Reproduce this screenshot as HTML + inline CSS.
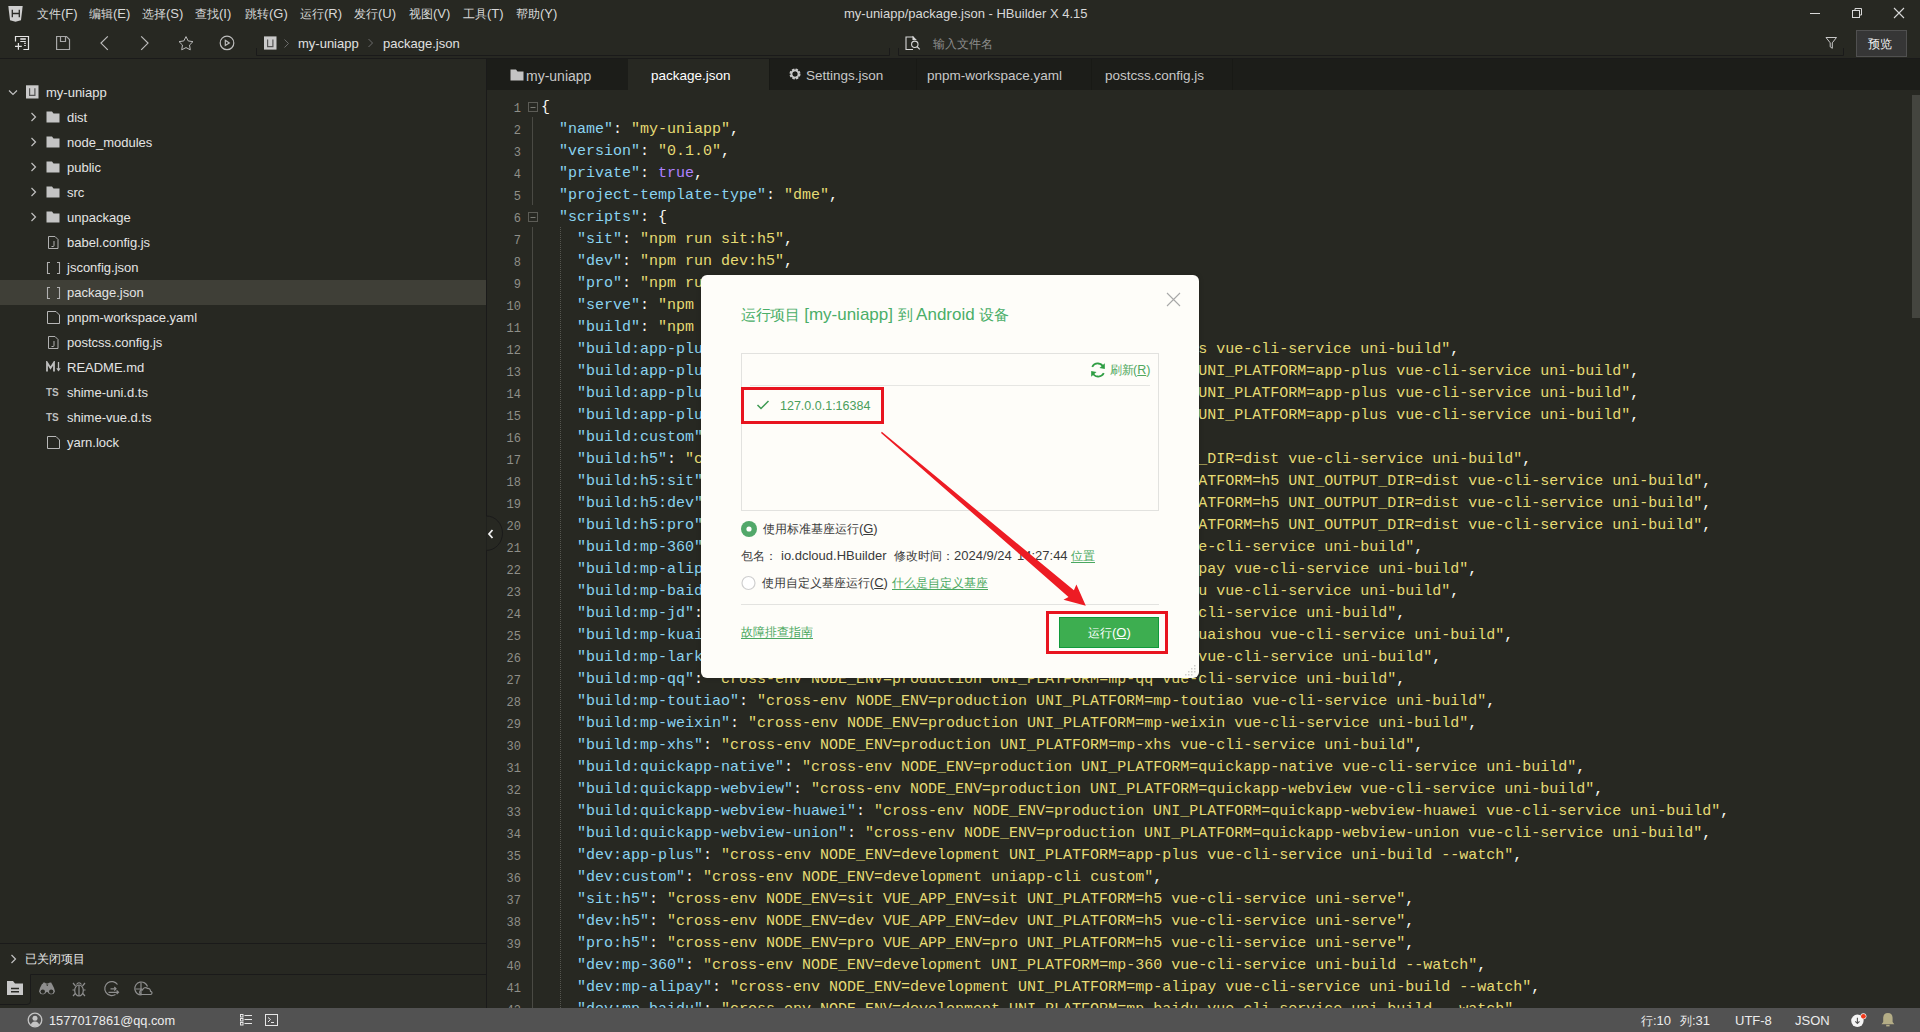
<!DOCTYPE html><html><head><meta charset="utf-8"><style>
*{margin:0;padding:0;box-sizing:border-box}
html,body{width:1920px;height:1032px;overflow:hidden;background:#272822;font-family:"Liberation Sans",sans-serif;color:#dcdcdc}
.a{position:absolute}
.t{position:absolute;white-space:pre;font-size:13px;line-height:16px}
.menu>span{position:absolute;top:6px;font-size:13px;color:#d8d8d8;white-space:pre}
.code{position:absolute;left:541px;top:97px;font-family:"Liberation Mono",monospace;font-size:15px;line-height:22px;white-space:pre;color:#f8f8f2}
.ln{position:absolute;left:489px;top:98px;width:32px;text-align:right;font-family:"Liberation Mono",monospace;font-size:12px;line-height:22px;color:#8f8f89;white-space:pre}
.k{color:#8ad3f0}.s{color:#e6db74}.p{color:#f8f8f2}.b{color:#ae81ff}
.tree .t{color:#e4e4e4}
.cj{font-size:0.923em;display:inline-block;width:1em;overflow:visible}
.ttl .cj{font-size:0.86em}
</style></head><body><div class="a" style="left:0;top:0;width:1920px;height:56px;background:#272822"></div><svg class="a" style="left:8px;top:6px" width="16" height="17" viewBox="0 0 16 17"><path d="M0.3 0 H14.7 L13 14.3 L7.5 15.8 L2 14.3 Z" fill="#cfcfcf"/><path d="M4.3 3.8 V11.3 M11.3 3.8 V11.3 M4.3 7.5 H11.3" stroke="#2a2a26" stroke-width="1.3" fill="none"/></svg><div class="menu"><span style="left:37px"><span class="cj">文</span><span class="cj">件</span>(F)</span><span style="left:89px"><span class="cj">编</span><span class="cj">辑</span>(E)</span><span style="left:142px"><span class="cj">选</span><span class="cj">择</span>(S)</span><span style="left:195px"><span class="cj">查</span><span class="cj">找</span>(I)</span><span style="left:245px"><span class="cj">跳</span><span class="cj">转</span>(G)</span><span style="left:300px"><span class="cj">运</span><span class="cj">行</span>(R)</span><span style="left:354px"><span class="cj">发</span><span class="cj">行</span>(U)</span><span style="left:409px"><span class="cj">视</span><span class="cj">图</span>(V)</span><span style="left:463px"><span class="cj">工</span><span class="cj">具</span>(T)</span><span style="left:516px"><span class="cj">帮</span><span class="cj">助</span>(Y)</span></div><div class="t" style="left:844px;top:6px;color:#d8d8d8">my-uniapp/package.json - HBuilder X 4.15</div><svg class="a" style="left:1800px;top:0" width="120" height="28" viewBox="0 0 120 28"><path d="M10 13.5 H20" stroke="#d8d8d8" stroke-width="1"/><rect x="52.5" y="10.5" width="7" height="7" fill="none" stroke="#d8d8d8"/><path d="M55 10.5 V8.5 H61.5 V15 H59.5" fill="none" stroke="#d8d8d8"/><path d="M94 8 L104 18 M104 8 L94 18" stroke="#d8d8d8" stroke-width="1.1"/></svg><svg class="a" style="left:0;top:28px" width="300" height="30" viewBox="0 0 300 30">
<g fill="none" stroke="#bdbdbd" stroke-width="1.2">
<path d="M15.5 13.6 V8.5 H28.5 V21.5 H23.4" stroke="#e4e4e4"/><path d="M20.3 11 H25.8" stroke-width="1.6" stroke="#e4e4e4"/><path d="M20.3 13.5 H25.8 M24.2 15.4 H25.8 M24.2 17.5 H25.8" stroke="#e4e4e4"/><path d="M15 18.4 H21.8 M18.4 15 V21.8" stroke="#e4e4e4"/>
<path d="M56.6 8.5 H66.5 L69.5 11.5 V21.5 H56.6 Z" stroke="#a8a8a8"/><path d="M60.5 8.5 V13.5 H65.5 V8.5" stroke="#a8a8a8"/>
<path d="M107.8 8.3 L101 15.1 L107.8 21.9"/>
<path d="M141.2 8.3 L148 15.1 L141.2 21.9"/>
<path d="M186.00 8.60 L188.17 12.91 L192.94 13.64 L189.52 17.04 L190.29 21.81 L186.00 19.60 L181.71 21.81 L182.48 17.04 L179.06 13.64 L183.83 12.91 Z" stroke-linejoin="round" stroke-width="1"/>
<circle cx="227" cy="14.9" r="6.8"/><path d="M225.3 12.3 L229.3 14.9 L225.3 17.5 Z"/>
</g>
<rect x="264" y="8.4" width="12.5" height="13.2" fill="#cacaca"/><path d="M267.6 11.6 V18.6 H272.9 V11.6" stroke="#555" stroke-width="1.2" fill="none"/>
<path d="M284.5 11.5 L288.5 15.5 L284.5 19.5" stroke="#6c6c6c" fill="none"/>

</svg><div class="t" style="left:298px;top:36px;font-size:13px;color:#e0e0e0">my-uniapp</div><svg class="a" style="left:366px;top:37px" width="10" height="12"><path d="M2.5 2 L6.5 6 L2.5 10" stroke="#6c6c6c" fill="none"/></svg><div class="t" style="left:383px;top:36px;font-size:13px;color:#e0e0e0">package.json</div><svg class="a" style="left:880px;top:28px" width="1040" height="30" viewBox="0 0 1040 30"><g fill="none" stroke="#d8d8d8" stroke-width="1.1"><path d="M33 21.5 H26 V9 H33.5"/><path d="M33 9 L35.5 11.5 H33 Z" fill="#d8d8d8"/><circle cx="34.8" cy="16.3" r="3.2"/><path d="M37 18.5 L39.8 21.3"/></g><path d="M946 9.5 H956.5 L952.3 14.8 V20.3 L950.2 18.8 V14.8 Z" fill="none" stroke="#c8c8c8" stroke-width="1"/></svg><div class="t" style="left:933px;top:36px;font-size:13px;color:#8c8c8c"><span class="cj">输</span><span class="cj">入</span><span class="cj">文</span><span class="cj">件</span><span class="cj">名</span></div><div class="a" style="left:1856px;top:30px;width:51px;height:27px;background:#363636;border:1px solid #505050"></div><div class="t" style="left:1868px;top:36px;font-size:13px;color:#f4f4f4"><span class="cj">预</span><span class="cj">览</span></div><svg class="a" style="left:0;top:0" width="1920" height="60"><path d="M256.5 48 V55.5 H889.5 V48 M898.5 48 V55.5 H1843.5 V48" stroke="#1a1a1a" fill="none"/></svg><div class="a" style="left:0;top:58px;width:1920px;height:1px;background:#1a1a1a"></div><div class="a" style="left:486px;top:58px;width:1px;height:950px;background:#1a1a1a"></div><div class="a" style="left:0;top:280px;width:486px;height:25px;background:#3f3f37"></div><div class="tree"><svg class="a" style="left:8px;top:89px" width="10" height="8"><path d="M1 1.5 L5 5.5 L9 1.5" stroke="#c0c0c0" stroke-width="1.2" fill="none"/></svg><svg class="a" style="left:26px;top:85px" width="14" height="14"><rect x="0" y="0.3" width="12.5" height="13.2" fill="#cacaca"/><path d="M3.6 3.3 V10.3 H8.9 V3.3" stroke="#555" stroke-width="1.2" fill="none"/></svg><div class="t" style="left:46px;top:85px">my-uniapp</div><svg class="a" style="left:30px;top:112px" width="8" height="10"><path d="M1.5 1 L5.5 5 L1.5 9" stroke="#c0c0c0" stroke-width="1.2" fill="none"/></svg><svg class="a" style="left:46px;top:111px" width="14" height="12"><path d="M0.5 0.5 H6 L7.5 2.5 H13.5 V11.5 H0.5 Z" fill="#c4c4c4"/></svg><div class="t" style="left:67px;top:110px">dist</div><svg class="a" style="left:30px;top:137px" width="8" height="10"><path d="M1.5 1 L5.5 5 L1.5 9" stroke="#c0c0c0" stroke-width="1.2" fill="none"/></svg><svg class="a" style="left:46px;top:136px" width="14" height="12"><path d="M0.5 0.5 H6 L7.5 2.5 H13.5 V11.5 H0.5 Z" fill="#c4c4c4"/></svg><div class="t" style="left:67px;top:135px">node_modules</div><svg class="a" style="left:30px;top:162px" width="8" height="10"><path d="M1.5 1 L5.5 5 L1.5 9" stroke="#c0c0c0" stroke-width="1.2" fill="none"/></svg><svg class="a" style="left:46px;top:161px" width="14" height="12"><path d="M0.5 0.5 H6 L7.5 2.5 H13.5 V11.5 H0.5 Z" fill="#c4c4c4"/></svg><div class="t" style="left:67px;top:160px">public</div><svg class="a" style="left:30px;top:187px" width="8" height="10"><path d="M1.5 1 L5.5 5 L1.5 9" stroke="#c0c0c0" stroke-width="1.2" fill="none"/></svg><svg class="a" style="left:46px;top:186px" width="14" height="12"><path d="M0.5 0.5 H6 L7.5 2.5 H13.5 V11.5 H0.5 Z" fill="#c4c4c4"/></svg><div class="t" style="left:67px;top:185px">src</div><svg class="a" style="left:30px;top:212px" width="8" height="10"><path d="M1.5 1 L5.5 5 L1.5 9" stroke="#c0c0c0" stroke-width="1.2" fill="none"/></svg><svg class="a" style="left:46px;top:211px" width="14" height="12"><path d="M0.5 0.5 H6 L7.5 2.5 H13.5 V11.5 H0.5 Z" fill="#c4c4c4"/></svg><div class="t" style="left:67px;top:210px">unpackage</div><svg class="a" style="left:47px;top:236px" width="13" height="14"><path d="M1.5 0.5 H8 L11 3.5 V12.5 H1.5 Z" fill="none" stroke="#b0b0b0"/><path d="M7 5 V9.5 Q7 10.5 6 10.5 H4.5" stroke="#b0b0b0" fill="none"/></svg><div class="t" style="left:67px;top:235px">babel.config.js</div><svg class="a" style="left:46px;top:261px" width="15" height="14"><path d="M4 1.5 H1.5 V12.5 H4 M11 1.5 H13.5 V12.5 H11" stroke="#b0b0b0" stroke-width="1.1" fill="none"/></svg><div class="t" style="left:67px;top:260px">jsconfig.json</div><svg class="a" style="left:46px;top:286px" width="15" height="14"><path d="M4 1.5 H1.5 V12.5 H4 M11 1.5 H13.5 V12.5 H11" stroke="#b0b0b0" stroke-width="1.1" fill="none"/></svg><div class="t" style="left:67px;top:285px">package.json</div><svg class="a" style="left:47px;top:311px" width="14" height="13"><path d="M0.5 0.5 H9 L12.5 4 V12.5 H0.5 Z" fill="none" stroke="#b8b8b8"/></svg><div class="t" style="left:67px;top:310px">pnpm-workspace.yaml</div><svg class="a" style="left:47px;top:336px" width="13" height="14"><path d="M1.5 0.5 H8 L11 3.5 V12.5 H1.5 Z" fill="none" stroke="#b0b0b0"/><path d="M7 5 V9.5 Q7 10.5 6 10.5 H4.5" stroke="#b0b0b0" fill="none"/></svg><div class="t" style="left:67px;top:335px">postcss.config.js</div><svg class="a" style="left:46px;top:361px" width="16" height="12"><path d="M1 10.5 V1.5 L4.5 7 L8 1.5 V10.5" stroke="#bdbdbd" stroke-width="1.8" fill="none" stroke-linejoin="miter"/><path d="M12.5 1 V9.5" stroke="#bdbdbd" stroke-width="1.3"/><path d="M10.3 7.3 L12.5 10.5 L14.7 7.3 Z" fill="#bdbdbd"/></svg><div class="t" style="left:67px;top:360px">README.md</div><div class="t" style="left:46px;top:385px;color:#bdbdbd;font-size:10px;font-weight:bold">TS</div><div class="t" style="left:67px;top:385px">shime-uni.d.ts</div><div class="t" style="left:46px;top:410px;color:#bdbdbd;font-size:10px;font-weight:bold">TS</div><div class="t" style="left:67px;top:410px">shime-vue.d.ts</div><svg class="a" style="left:47px;top:436px" width="14" height="13"><path d="M0.5 0.5 H9 L12.5 4 V12.5 H0.5 Z" fill="none" stroke="#b8b8b8"/></svg><div class="t" style="left:67px;top:435px">yarn.lock</div></div><svg class="a" style="left:486px;top:515px" width="20" height="38" viewBox="0 0 20 38"><path d="M0.5 1 A16 17.2 0 0 1 0.5 35.4" fill="#272822" stroke="#1a1a1a"/><path d="M6.5 15 L3 19 L6.5 23" stroke="#f0f0f0" stroke-width="1.8" fill="none"/></svg><div class="a" style="left:0;top:943px;width:486px;height:1px;background:#1a1a1a"></div><svg class="a" style="left:10px;top:954px" width="8" height="10"><path d="M1.5 1 L5.5 5 L1.5 9" stroke="#c0c0c0" stroke-width="1.2" fill="none"/></svg><div class="t" style="left:25px;top:951px;color:#e4e4e4"><span class="cj">已</span><span class="cj">关</span><span class="cj">闭</span><span class="cj">项</span><span class="cj">目</span></div><svg class="a" style="left:0;top:974px" width="486" height="34" viewBox="0 0 486 34"><path d="M30.5 0.5 H486" stroke="#1a1a1a"/><path d="M30.5 0.5 V27 Q30.5 30.5 27 30.5 H0" stroke="#1a1a1a" fill="none"/><path d="M7 7 H13 L15 9.5 H23 V21 H7 Z" fill="#c8c8c8"/><path d="M11 14.5 H19 M11 17.8 H19" stroke="#2a2b26" stroke-width="1.5"/><g fill="#8e8e8e"><path d="M40 14 L42 10 H46 L47 12 H47.5 L48.5 10 H52 L54 14 L55 17.5 A4 4 0 0 1 47.5 18 H46.5 A4 4 0 0 1 39 17.5 Z"/><path d="M42.5 9 Q44.5 8 46 9.5 H48 Q50 8 52 9 L51 10.5 H43.5 Z"/></g><g fill="#272822"><circle cx="42.8" cy="17.6" r="2.2"/><circle cx="51.2" cy="17.6" r="2.2"/></g><g fill="none" stroke="#8e8e8e" stroke-width="1.2"><ellipse cx="79" cy="16.5" rx="4.3" ry="5.5"/><path d="M79 11 V22 M76.5 10.5 Q79 7 81.5 10.5 M73 9 L75.5 12 M85 9 L82.5 12 M72.5 16 H74.7 M85.5 16 H83.3 M73 22 L75.3 19.5 M85 22 L82.7 19.5"/><path d="M117.5 10.5 A7 7 0 1 0 115.5 20.5"/><path d="M110.5 14.8 H116 M114.3 13 L116 14.8 L114.3 16.6 M108.5 18.3 H118.5 M116.6 16.5 L118.5 18.3 L116.6 20.1"/><path d="M147.5 12.5 A6.5 6.5 0 1 0 141.5 21"/><path d="M135.5 15 H142 M141 8.5 V21"/><path d="M141.5 20.5 H150.3 A1.6 1.6 0 0 0 150.5 17.3 A2.6 2.6 0 0 0 147.5 14.5 A3 3 0 0 0 142.5 16 A2.2 2.2 0 0 0 141.5 20.5 Z"/></g></svg><div class="a" style="left:487px;top:59px;width:1433px;height:31px;background:#1c1d19"></div><div class="a" style="left:628px;top:59px;width:141px;height:31px;background:#272822"></div><div class="a" style="left:769px;top:59px;width:1px;height:31px;background:#181915"></div><div class="a" style="left:916px;top:59px;width:1px;height:31px;background:#181915"></div><div class="a" style="left:1091px;top:59px;width:1px;height:31px;background:#181915"></div><div class="a" style="left:1232px;top:59px;width:1px;height:31px;background:#181915"></div><svg class="a" style="left:510px;top:69px" width="14" height="12"><path d="M0.5 0.5 H6 L7.5 2.5 H13.5 V11.5 H0.5 Z" fill="#c4c4c4"/></svg><div class="t" style="left:526px;top:68px;font-size:14px;color:#c8c8c8">my-uniapp</div><div class="t" style="left:651px;top:68px;font-size:13.5px;color:#ffffff">package.json</div><svg class="a" style="left:788px;top:67px" width="14" height="14" viewBox="0 0 14 14"><circle cx="7" cy="7" r="4.2" fill="none" stroke="#c8c8c8" stroke-width="2.6" stroke-dasharray="2.2 1.1"/><circle cx="7" cy="7" r="3.6" fill="none" stroke="#c8c8c8" stroke-width="1.8"/></svg><div class="t" style="left:806px;top:68px;font-size:13.5px;color:#c8c8c8">Settings.json</div><div class="t" style="left:927px;top:68px;font-size:13.5px;color:#c8c8c8">pnpm-workspace.yaml</div><div class="t" style="left:1105px;top:68px;font-size:13.5px;color:#c8c8c8">postcss.config.js</div><div class="ln">1
2
3
4
5
6
7
8
9
10
11
12
13
14
15
16
17
18
19
20
21
22
23
24
25
26
27
28
29
30
31
32
33
34
35
36
37
38
39
40
41
42</div><div class="a" style="left:532px;top:117px;width:1px;height:88px;background:#4a4a44"></div><div class="a" style="left:532px;top:227px;width:1px;height:781px;background:#4a4a44"></div><div class="a" style="left:560px;top:227px;width:1px;height:781px;background-image:linear-gradient(#55554f 50%,transparent 50%);background-size:1px 2px"></div><svg class="a" style="left:528px;top:102px" width="11" height="11"><rect x="0.5" y="0.5" width="9" height="9" fill="#272822" stroke="#5c5c56"/><path d="M2.5 5.5 H7.5" stroke="#7a7a74"/></svg><svg class="a" style="left:528px;top:212px" width="11" height="11"><rect x="0.5" y="0.5" width="9" height="9" fill="#272822" stroke="#5c5c56"/><path d="M2.5 5.5 H7.5" stroke="#7a7a74"/></svg><div class="code">{
  <span class="k">&quot;name&quot;</span>: <span class="s">&quot;my-uniapp&quot;</span>,
  <span class="k">&quot;version&quot;</span>: <span class="s">&quot;0.1.0&quot;</span>,
  <span class="k">&quot;private&quot;</span>: <span class="b">true</span>,
  <span class="k">&quot;project-template-type&quot;</span>: <span class="s">&quot;dme&quot;</span>,
  <span class="k">&quot;scripts&quot;</span>: {
    <span class="k">&quot;sit&quot;</span>: <span class="s">&quot;npm run sit:h5&quot;</span>,
    <span class="k">&quot;dev&quot;</span>: <span class="s">&quot;npm run dev:h5&quot;</span>,
    <span class="k">&quot;pro&quot;</span>: <span class="s">&quot;npm run pro:h5&quot;</span>,
    <span class="k">&quot;serve&quot;</span>: <span class="s">&quot;npm run dev:h5&quot;</span>,
    <span class="k">&quot;build&quot;</span>: <span class="s">&quot;npm run build:h5&quot;</span>,
    <span class="k">&quot;build:app-plus&quot;</span>: <span class="s">&quot;cross-env NODE_ENV=production UNI_PLATFORM=app-plus vue-cli-service uni-build&quot;</span>,
    <span class="k">&quot;build:app-plus:sit&quot;</span>: <span class="s">&quot;cross-env NODE_ENV=production VUE_APP_ENV=sit UNI_PLATFORM=app-plus vue-cli-service uni-build&quot;</span>,
    <span class="k">&quot;build:app-plus:dev&quot;</span>: <span class="s">&quot;cross-env NODE_ENV=production VUE_APP_ENV=dev UNI_PLATFORM=app-plus vue-cli-service uni-build&quot;</span>,
    <span class="k">&quot;build:app-plus:pro&quot;</span>: <span class="s">&quot;cross-env NODE_ENV=production VUE_APP_ENV=pro UNI_PLATFORM=app-plus vue-cli-service uni-build&quot;</span>,
    <span class="k">&quot;build:custom&quot;</span>: <span class="s">&quot;cross-env NODE_ENV=production uniapp-cli custom&quot;</span>,
    <span class="k">&quot;build:h5&quot;</span>: <span class="s">&quot;cross-env NODE_ENV=production UNI_PLATFORM=h5 UNI_OUTPUT_DIR=dist vue-cli-service uni-build&quot;</span>,
    <span class="k">&quot;build:h5:sit&quot;</span>: <span class="s">&quot;cross-env NODE_ENV=production VUE_APP_ENV=sit UNI_PLATFORM=h5 UNI_OUTPUT_DIR=dist vue-cli-service uni-build&quot;</span>,
    <span class="k">&quot;build:h5:dev&quot;</span>: <span class="s">&quot;cross-env NODE_ENV=production VUE_APP_ENV=dev UNI_PLATFORM=h5 UNI_OUTPUT_DIR=dist vue-cli-service uni-build&quot;</span>,
    <span class="k">&quot;build:h5:pro&quot;</span>: <span class="s">&quot;cross-env NODE_ENV=production VUE_APP_ENV=pro UNI_PLATFORM=h5 UNI_OUTPUT_DIR=dist vue-cli-service uni-build&quot;</span>,
    <span class="k">&quot;build:mp-360&quot;</span>: <span class="s">&quot;cross-env NODE_ENV=production UNI_PLATFORM=mp-360 vue-cli-service uni-build&quot;</span>,
    <span class="k">&quot;build:mp-alipay&quot;</span>: <span class="s">&quot;cross-env NODE_ENV=production UNI_PLATFORM=mp-alipay vue-cli-service uni-build&quot;</span>,
    <span class="k">&quot;build:mp-baidu&quot;</span>: <span class="s">&quot;cross-env NODE_ENV=production UNI_PLATFORM=mp-baidu vue-cli-service uni-build&quot;</span>,
    <span class="k">&quot;build:mp-jd&quot;</span>: <span class="s">&quot;cross-env NODE_ENV=production UNI_PLATFORM=mp-jd vue-cli-service uni-build&quot;</span>,
    <span class="k">&quot;build:mp-kuaishou&quot;</span>: <span class="s">&quot;cross-env NODE_ENV=production UNI_PLATFORM=mp-kuaishou vue-cli-service uni-build&quot;</span>,
    <span class="k">&quot;build:mp-lark&quot;</span>: <span class="s">&quot;cross-env NODE_ENV=production UNI_PLATFORM=mp-lark vue-cli-service uni-build&quot;</span>,
    <span class="k">&quot;build:mp-qq&quot;</span>: <span class="s">&quot;cross-env NODE_ENV=production UNI_PLATFORM=mp-qq vue-cli-service uni-build&quot;</span>,
    <span class="k">&quot;build:mp-toutiao&quot;</span>: <span class="s">&quot;cross-env NODE_ENV=production UNI_PLATFORM=mp-toutiao vue-cli-service uni-build&quot;</span>,
    <span class="k">&quot;build:mp-weixin&quot;</span>: <span class="s">&quot;cross-env NODE_ENV=production UNI_PLATFORM=mp-weixin vue-cli-service uni-build&quot;</span>,
    <span class="k">&quot;build:mp-xhs&quot;</span>: <span class="s">&quot;cross-env NODE_ENV=production UNI_PLATFORM=mp-xhs vue-cli-service uni-build&quot;</span>,
    <span class="k">&quot;build:quickapp-native&quot;</span>: <span class="s">&quot;cross-env NODE_ENV=production UNI_PLATFORM=quickapp-native vue-cli-service uni-build&quot;</span>,
    <span class="k">&quot;build:quickapp-webview&quot;</span>: <span class="s">&quot;cross-env NODE_ENV=production UNI_PLATFORM=quickapp-webview vue-cli-service uni-build&quot;</span>,
    <span class="k">&quot;build:quickapp-webview-huawei&quot;</span>: <span class="s">&quot;cross-env NODE_ENV=production UNI_PLATFORM=quickapp-webview-huawei vue-cli-service uni-build&quot;</span>,
    <span class="k">&quot;build:quickapp-webview-union&quot;</span>: <span class="s">&quot;cross-env NODE_ENV=production UNI_PLATFORM=quickapp-webview-union vue-cli-service uni-build&quot;</span>,
    <span class="k">&quot;dev:app-plus&quot;</span>: <span class="s">&quot;cross-env NODE_ENV=development UNI_PLATFORM=app-plus vue-cli-service uni-build --watch&quot;</span>,
    <span class="k">&quot;dev:custom&quot;</span>: <span class="s">&quot;cross-env NODE_ENV=development uniapp-cli custom&quot;</span>,
    <span class="k">&quot;sit:h5&quot;</span>: <span class="s">&quot;cross-env NODE_ENV=sit VUE_APP_ENV=sit UNI_PLATFORM=h5 vue-cli-service uni-serve&quot;</span>,
    <span class="k">&quot;dev:h5&quot;</span>: <span class="s">&quot;cross-env NODE_ENV=dev VUE_APP_ENV=dev UNI_PLATFORM=h5 vue-cli-service uni-serve&quot;</span>,
    <span class="k">&quot;pro:h5&quot;</span>: <span class="s">&quot;cross-env NODE_ENV=pro VUE_APP_ENV=pro UNI_PLATFORM=h5 vue-cli-service uni-serve&quot;</span>,
    <span class="k">&quot;dev:mp-360&quot;</span>: <span class="s">&quot;cross-env NODE_ENV=development UNI_PLATFORM=mp-360 vue-cli-service uni-build --watch&quot;</span>,
    <span class="k">&quot;dev:mp-alipay&quot;</span>: <span class="s">&quot;cross-env NODE_ENV=development UNI_PLATFORM=mp-alipay vue-cli-service uni-build --watch&quot;</span>,
    <span class="k">&quot;dev:mp-baidu&quot;</span>: <span class="s">&quot;cross-env NODE_ENV=development UNI_PLATFORM=mp-baidu vue-cli-service uni-build --watch&quot;</span>,</div><div class="a" style="left:1912px;top:95px;width:8px;height:223px;background:#44453f"></div><div class="a" style="left:0;top:1008px;width:1920px;height:24px;background:#525252"></div><svg class="a" style="left:27px;top:1012px" width="16" height="16" viewBox="0 0 16 16"><circle cx="8" cy="8" r="6.8" fill="none" stroke="#c4c4c4" stroke-width="1.3"/><circle cx="8" cy="6.3" r="2.5" fill="#c4c4c4"/><path d="M3.8 13.2 Q4.5 9.5 8 9.5 Q11.5 9.5 12.2 13.2 Q8 15.5 3.8 13.2 Z" fill="#c4c4c4"/></svg><div class="t" style="left:49px;top:1013px;color:#ececec;font-size:12.8px">1577017861@qq.com</div><svg class="a" style="left:238px;top:1012px" width="44" height="16" viewBox="0 0 44 16"><g fill="none" stroke="#e6e6e6"><rect x="2.5" y="2.5" width="2.5" height="2.5"/><rect x="2.5" y="6.5" width="2.5" height="2.5"/><rect x="2.5" y="10.5" width="2.5" height="2.5"/><path d="M6.5 3.5 H14 M6.5 7.5 H14 M6.5 11.5 H14"/><rect x="27.5" y="2.5" width="12" height="11"/><path d="M30 5.5 L32.5 7.5 L30 10 M33 10.5 H36"/></g></svg><div class="t" style="left:1641px;top:1013px;color:#ececec"><span class="cj">行</span>:10</div><div class="t" style="left:1680px;top:1013px;color:#ececec"><span class="cj">列</span>:31</div><div class="t" style="left:1735px;top:1013px;color:#ececec">UTF-8</div><div class="t" style="left:1795px;top:1013px;color:#ececec">JSON</div><svg class="a" style="left:1848px;top:1010px" width="50" height="20" viewBox="0 0 50 20"><circle cx="9.4" cy="10.8" r="6.2" fill="#f4f4f4"/><path d="M9.4 7.8 V13.3 M7.3 11.3 L9.4 13.4 L11.5 11.3" stroke="#525252" stroke-width="1.1" fill="none"/><circle cx="15.4" cy="6.3" r="3" fill="#f4f4f4"/><circle cx="15.4" cy="6.3" r="2.4" fill="#f03a1c"/><path d="M33.5 14.2 H46.3 L44.6 12 V8.3 Q44.6 3 39.9 3 Q35.2 3 35.2 8.3 V12 Z" fill="#b4ad86"/><path d="M38.2 15.6 H41.6" stroke="#b4ad86" stroke-width="1.6"/></svg><div class="a" style="left:701px;top:275px;width:498px;height:403px;border-radius:6px;background:#fefdf9;box-shadow:0 0 5px rgba(0,0,0,0.18)"></div>
<svg class="a" style="left:1165px;top:291px" width="17" height="17" viewBox="0 0 17 17"><path d="M2 2 L15 15 M15 2 L2 15" stroke="#a8a8a8" stroke-width="1.1"/></svg>
<div class="t ttl" style="left:741px;top:306px;font-size:17px;line-height:18px;color:#4aae68"><span class="cj">运</span><span class="cj">行</span><span class="cj">项</span><span class="cj">目</span> [my-uniapp] <span class="cj">到</span> Android <span class="cj">设</span><span class="cj">备</span></div>
<div class="a" style="left:741px;top:353px;width:418px;height:158px;border:1px solid #e2e2df"></div>
<div class="a" style="left:750px;top:385px;width:400px;height:1px;background:#e6e6e3"></div>
<svg class="a" style="left:1089px;top:361px" width="18" height="18" viewBox="0 0 18 18"><g fill="none" stroke="#2f9e44" stroke-width="1.8"><path d="M14.5 6.5 A6.2 6.2 0 0 0 3.2 5.8"/><path d="M3.5 11.5 A6.2 6.2 0 0 0 14.8 12.2"/></g><path d="M15.8 2.2 L15.8 8 L10.5 7 Z" fill="#2f9e44"/><path d="M2.2 15.8 L2.2 10 L7.5 11 Z" fill="#2f9e44"/></svg>
<div class="t" style="left:1110px;top:362px;font-size:12.5px;color:#4fa860"><span class="cj">刷</span><span class="cj">新</span>(<u>R</u>)</div>
<div class="a" style="left:741px;top:387px;width:143px;height:37px;border:3px solid #e8141f"></div>
<svg class="a" style="left:756px;top:399px" width="14" height="12" viewBox="0 0 14 12"><path d="M1.5 6 L5 9.5 L12.5 2" stroke="#3d9a52" stroke-width="1.5" fill="none"/></svg>
<div class="t" style="left:780px;top:398px;font-size:12.5px;color:#4a9e5c">127.0.0.1:16384</div>
<svg class="a" style="left:740px;top:520px" width="18" height="18" viewBox="0 0 18 18"><circle cx="9" cy="9" r="8" fill="#52a86a"/><circle cx="9" cy="9" r="2.6" fill="#fff"/></svg>
<div class="t" style="left:763px;top:521px;font-size:13px;color:#3a3a3a"><span class="cj">使</span><span class="cj">用</span><span class="cj">标</span><span class="cj">准</span><span class="cj">基</span><span class="cj">座</span><span class="cj">运</span><span class="cj">行</span>(<u>G</u>)</div>
<div class="t" style="left:741px;top:548px;font-size:13px;color:#3a3a3a"><span class="cj">包</span><span class="cj">名</span><span class="cj">：</span></div><div class="t" style="left:781px;top:548px;font-size:13px;color:#3a3a3a">io.dcloud.HBuilder</div><div class="t" style="left:894px;top:548px;font-size:13px;color:#3a3a3a"><span class="cj">修</span><span class="cj">改</span><span class="cj">时</span><span class="cj">间</span><span class="cj">：</span></div><div class="t" style="left:954px;top:548px;font-size:13px;color:#3a3a3a">2024/9/24</div><div class="t" style="left:1017px;top:548px;font-size:13px;color:#3a3a3a">14:27:44</div>
<div class="t" style="left:1071px;top:548px;font-size:13px;color:#4aa860;height:15px;border-bottom:1px solid #4aa860"><span class="cj">位</span><span class="cj">置</span></div>
<svg class="a" style="left:741px;top:575px" width="16" height="16" viewBox="0 0 16 16"><circle cx="7.5" cy="8" r="6.5" fill="#fff" stroke="#cfcfcf" stroke-width="1.2"/></svg>
<div class="t" style="left:762px;top:575px;font-size:13px;color:#3a3a3a"><span class="cj">使</span><span class="cj">用</span><span class="cj">自</span><span class="cj">定</span><span class="cj">义</span><span class="cj">基</span><span class="cj">座</span><span class="cj">运</span><span class="cj">行</span>(<u>C</u>)</div>
<div class="t" style="left:892px;top:575px;font-size:13px;color:#4aa860;height:15px;border-bottom:1px solid #4aa860"><span class="cj">什</span><span class="cj">么</span><span class="cj">是</span><span class="cj">自</span><span class="cj">定</span><span class="cj">义</span><span class="cj">基</span><span class="cj">座</span></div>
<div class="a" style="left:741px;top:604px;width:418px;height:1px;background:#e3e3e0"></div>
<div class="t" style="left:741px;top:624px;font-size:13px;color:#4aa860;height:15px;border-bottom:1px solid #4aa860"><span class="cj">故</span><span class="cj">障</span><span class="cj">排</span><span class="cj">查</span><span class="cj">指</span><span class="cj">南</span></div>
<div class="a" style="left:1046px;top:611px;width:122px;height:43px;border:3px solid #e8141f"></div>
<div class="a" style="left:1059px;top:617px;width:100px;height:31px;background:#3dae50;border:1px solid #109a3a"></div>
<div class="t" style="left:1088px;top:625px;font-size:13px;color:#ffffff"><span class="cj">运</span><span class="cj">行</span>(<u>O</u>)</div>
<svg class="a" style="left:0;top:0" width="1920" height="1032" viewBox="0 0 1920 1032"><path d="M881.8 431.8 L1073.9 590.3 L1076.4 584.6 L1085.8 605.7 L1063.5 599.8 L1068.5 597 L881 433 Z" fill="#ed1c24"/></svg>
<svg class="a" style="left:1184px;top:663px" width="14" height="14"><g fill="#d0d0cc"><rect x="10" y="2" width="1.5" height="1.5"/><rect x="7" y="5" width="1.5" height="1.5"/><rect x="10" y="5" width="1.5" height="1.5"/><rect x="4" y="8" width="1.5" height="1.5"/><rect x="7" y="8" width="1.5" height="1.5"/><rect x="10" y="8" width="1.5" height="1.5"/><rect x="1" y="11" width="1.5" height="1.5"/><rect x="4" y="11" width="1.5" height="1.5"/><rect x="7" y="11" width="1.5" height="1.5"/></g></svg>
</body></html>
